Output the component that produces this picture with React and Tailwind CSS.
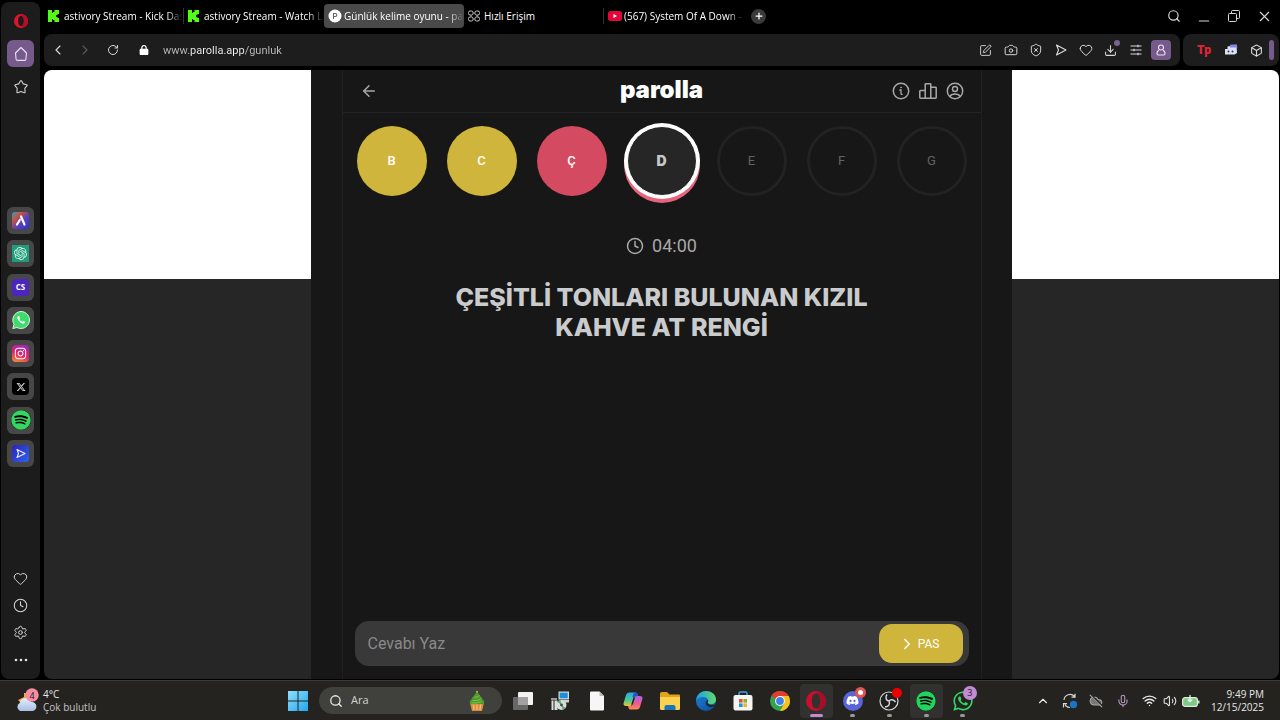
import { useState } from "react";
import clsx from "clsx";
import {
  ArrowLeft, Box, Camera, ChevronLeft, ChevronRight, ChevronUp, Clock, CloudOff,
  Download, Heart, Mic, Minus, Plus, RotateCw, Search, Settings, ShieldX,
  SquarePen, Volume2, Wifi, X,
} from "lucide-react";
import { FaDiscord, FaInstagram, FaLock, FaSpotify, FaWhatsapp, FaXTwitter } from "react-icons/fa6";
import { SiOpenai } from "react-icons/si";

const UI_FONT = "font-['Open_Sans','Noto_Sans',sans-serif]";

/* ---------- small drawings ---------- */

function KickIcon() {
  return (
    <svg viewBox="0 0 11 12" className="h-3 w-[11px] shrink-0" fill="#53fc18">
      <path d="M0 0h4v3h1V2h1.500V0H11v4H9.500v1H8v2h1.500v1H11v4H6.500v-2H5V9H4v3H0z" />
    </svg>
  );
}

function ParollaIcon() {
  return (
    <svg viewBox="0 0 14 14" className="h-[14px] w-[14px] shrink-0">
      <circle cx="7" cy="7" r="6.500" fill="#fff" />
      <path d="M5.500 10V4.500h1.800a1.500 1.500 0 0 1 0 3H5.500" fill="none" stroke="#666" strokeWidth="1.100" />
    </svg>
  );
}

function SpeedDialIcon() {
  return (
    <svg viewBox="0 0 12 12" className="h-3 w-3 shrink-0" fill="none" stroke="#c4c4c4">
      <rect x=".5" y="1" width="4.500" height="4" rx="1.500" />
      <rect x="7" y="1" width="4.500" height="4" rx="1.500" />
      <rect x=".5" y="7" width="4.500" height="4" rx="1.500" />
      <rect x="7" y="7" width="4.500" height="4" rx="1.500" />
      <path d="M5 3h2M5 9h2M3 5v2M9 5v2" strokeWidth=".7" />
    </svg>
  );
}

function YoutubeIcon() {
  return (
    <svg viewBox="0 0 14 10" className="h-[10px] w-[14px] shrink-0">
      <rect width="14" height="10" rx="2.500" fill="#e3063a" />
      <path d="M5.500 3v4l3.500-2z" fill="#fff" />
    </svg>
  );
}

function RestoreIcon() {
  return (
    <svg viewBox="0 0 12 12" className="h-3 w-3" fill="none" stroke="currentColor">
      <rect x=".5" y="3.500" width="8" height="8" rx="1" />
      <path d="M3.500 3.500V1.500q0-1 1-1h6q1 0 1 1v6q0 1-1 1h-2" />
    </svg>
  );
}

function SendIcon() {
  return (
    <svg viewBox="0 0 14 14" className="h-[14px] w-[14px]" fill="none" stroke="currentColor" strokeWidth="1.100" strokeLinejoin="round">
      <path d="m2.500 2 9.500 5-9.500 5L4.500 7z" />
    </svg>
  );
}

function SlidersIcon() {
  return (
    <svg viewBox="0 0 12 12" className="h-3 w-3" fill="none" stroke="currentColor" strokeWidth="1.100">
      <path d="M.5 2h11M.5 6h11M.5 10h11M8 .8v2.400M4 4.800v2.400M8 8.800v2.400" />
    </svg>
  );
}

function OperaIcon({ className, dark }) {
  return (
    <svg viewBox="0 0 20 20" className={className}>
      <path
        fillRule="evenodd"
        fill={dark ? "#c8102e" : "#e0142f"}
        d="M10 0a10 10 0 1 0 0 20 10 10 0 0 0 0-20zm0 2.500c2.600 0 4.200 3.400 4.200 7.500s-1.600 7.500-4.200 7.500S5.800 14.100 5.800 10 7.400 2.500 10 2.500z"
      />
      <path d="M10 2.500c2-1.800 5-1.600 7.200.5 3.700 3.800 3.700 10.200 0 14-2.200 2.100-5.200 2.300-7.200.5 2.600 0 4.200-3.400 4.200-7.500S12.600 2.500 10 2.500z" fill={dark ? "#a50f26" : "#b80d26"} />
    </svg>
  );
}

function HouseIcon() {
  return (
    <svg viewBox="0 0 16 16" className="h-4 w-4" fill="none" stroke="#ece0f4" strokeWidth="1.100" strokeLinejoin="round">
      <path d="M2.500 7 8 1.500 13.500 7l-.6 6.200a1.300 1.300 0 0 1-1.300 1.200H4.400a1.300 1.300 0 0 1-1.300-1.200z" />
    </svg>
  );
}

function StarIcon() {
  return (
    <svg viewBox="0 0 16 16" className="h-4 w-4" fill="none" stroke="#cfcfcf" strokeWidth="1.100" strokeLinejoin="round">
      <path d="M7.400 2q.6-.9 1.200 0l1.700 2.900 3.300.8q.9.300.4 1l-2.200 2.700.3 3.700q0 .9-.8.600L8 12.400l-3.300 1.300q-.8.300-.8-.6l.3-3.700L2 6.700q-.5-.7.4-1l3.300-.8z" />
    </svg>
  );
}

function AriaIcon() {
  return (
    <svg viewBox="0 0 17 17" className="h-[17px] w-[17px]">
      <defs>
        <linearGradient id="aria" x1="0" y1="0" x2="1" y2="1">
          <stop offset="0" stopColor="#2aa5c8" />
          <stop offset=".3" stopColor="#c9503f" />
          <stop offset=".6" stopColor="#5740c4" />
          <stop offset="1" stopColor="#2d2fd6" />
        </linearGradient>
      </defs>
      <rect width="17" height="17" rx="3" fill="url(#aria)" />
      <path d="m9 4.500 3.500 8M7.800 8 5 12.500" fill="none" stroke="#fff" strokeWidth="2.200" strokeLinecap="round" />
    </svg>
  );
}

function PlayerIcon() {
  return (
    <svg viewBox="0 0 17 17" className="h-[17px] w-[17px]">
      <defs>
        <linearGradient id="player" x1="0" y1="0" x2="1" y2="1">
          <stop offset="0" stopColor="#2c23b8" />
          <stop offset="1" stopColor="#2f62ee" />
        </linearGradient>
      </defs>
      <rect width="17" height="17" rx="3" fill="url(#player)" />
      <path d="m5 4.500 8 4-8 4 1.500-4z" fill="none" stroke="#eef" strokeWidth="1.100" strokeLinejoin="round" />
    </svg>
  );
}

function DotsIcon() {
  return (
    <svg viewBox="0 0 14 4" className="h-1 w-[14px]" fill="#e4e4e4">
      <circle cx="2" cy="2" r="1.300" />
      <circle cx="7" cy="2" r="1.300" />
      <circle cx="12" cy="2" r="1.300" />
    </svg>
  );
}

function PersonIcon() {
  return (
    <svg viewBox="0 0 14 14" className="h-[14px] w-[14px]" fill="none" stroke="#efe4f6" strokeWidth="1.100">
      <circle cx="7" cy="4.500" r="2.500" />
      <path d="M5 7.200C3.200 8 2.800 9.300 3 11q.1 1 1.200 1h5.600q1.100 0 1.200-1c.2-1.700-.2-3-2-3.800" />
    </svg>
  );
}

function InfoIcon() {
  return (
    <svg viewBox="0 0 18 18" className="h-[18px] w-[18px]" fill="none" stroke="currentColor" strokeWidth="1.500" strokeLinecap="round">
      <circle cx="9" cy="9" r="7.700" />
      <path d="M7.800 8h1.200v3.600q0 .9 1.200.8" strokeWidth="1.300" />
      <circle cx="9" cy="5.500" r=".5" fill="currentColor" strokeWidth=".7" />
    </svg>
  );
}

function PodiumIcon() {
  return (
    <svg viewBox="0 0 18 18" className="h-[18px] w-[18px]" fill="none" stroke="currentColor" strokeWidth="1.500" strokeLinejoin="round">
      <path d="M6.200 16.200H1.500a.7.700 0 0 1-.7-.7V9.200a.7.700 0 0 1 .7-.7h4.700M6.200 16.200V2.500a.7.700 0 0 1 .7-.7h4.200a.7.700 0 0 1 .7.700v13.700zM11.800 5.200h4.700a.7.700 0 0 1 .7.700v9.600a.7.700 0 0 1-.7.700h-4.700" />
    </svg>
  );
}

function AccountIcon() {
  return (
    <svg viewBox="0 0 18 18" className="h-[18px] w-[18px]" fill="none" stroke="currentColor" strokeWidth="1.500">
      <circle cx="9" cy="9" r="7.700" />
      <circle cx="9" cy="7" r="2.500" />
      <path d="M3.800 14.500c1-1.700 2.800-2.500 5.200-2.500s4.200.8 5.200 2.500" />
    </svg>
  );
}

function WeatherIcon() {
  return (
    <svg viewBox="0 0 26 26" className="h-[26px] w-[26px]">
      <defs>
        <linearGradient id="cloud" x1="0" y1="0" x2="0" y2="1">
          <stop offset="0" stopColor="#e4edfb" />
          <stop offset="1" stopColor="#a9bfe6" />
        </linearGradient>
      </defs>
      <path d="M9 5v4L3 12l3 3 10-2-3-8z" fill="#f0a63a" />
      <path d="M5 23a4.500 4.500 0 0 1-.3-8 6 6 0 0 1 11.600-1A4.500 4.500 0 0 1 17.500 23z" fill="url(#cloud)" />
      <circle cx="17" cy="7" r="6.700" fill="#f58ea4" />
      <text x="17" y="10.500" fontSize="9" textAnchor="middle" fill="#222" fontFamily="Open Sans, sans-serif">4</text>
    </svg>
  );
}

function StartIcon() {
  return (
    <svg viewBox="0 0 20 20" className="h-5 w-5">
      <defs>
        <linearGradient id="win" x1="0" y1="0" x2="1" y2="1">
          <stop offset="0" stopColor="#8fe0fb" />
          <stop offset="1" stopColor="#21a6ee" />
        </linearGradient>
      </defs>
      <path d="M0 0h9.500v9.500H0zM10.500 0H20v9.500h-9.500zM0 10.500h9.500V20H0zM10.500 10.500H20V20h-9.500z" fill="url(#win)" />
    </svg>
  );
}

function CupcakeIcon() {
  return (
    <svg viewBox="0 0 18 22" className="h-[22px] w-[18px]">
      <path d="M2 13h14l-2 8H4z" fill="#d98a3c" />
      <path d="M5.500 14.500 6 20M9 14.500V20M12.500 14.500 12 20" stroke="#f6be72" strokeWidth="1.400" />
      <path d="M9 1c1 2.500 3 3.500 3.500 5.500 1.800.8 2 2 2 3 2.300.7 2.500 4.500 0 4.500h-11c-2.500 0-2.300-3.800 0-4.500 0-1.500.5-2.500 2-3C6 4.500 8 3.500 9 1z" fill="#4d9a2f" />
      <path d="M6.500 7q3 1 5-1.500M4.500 10.500q5 1 8.500-1.500M3.500 13q6 .5 10-1.500" fill="none" stroke="#8bc242" />
      <circle cx="9" cy="1.800" r="1" fill="#c9b24a" />
    </svg>
  );
}

function TaskViewIcon() {
  return (
    <svg viewBox="0 0 22 20" className="h-5 w-[22px]">
      <rect x="6" y="1" width="15" height="13" rx="1" fill="#f1f1f1" />
      <rect x="1" y="6" width="15" height="13" rx="1" fill="#707070" fillOpacity=".9" />
      <rect x="6" y="6" width="10" height="8" fill="#a2a2a2" />
    </svg>
  );
}

function SetupIcon() {
  return (
    <svg viewBox="0 0 20 20" className="h-5 w-5">
      <rect x="8.500" y=".5" width="10.500" height="8" fill="#d5dbe0" />
      <rect x="9.700" y="1.700" width="8" height="5.500" fill="#1c8fd8" />
      <path d="M10 9h9v2.500h-9z" fill="#cfcfcf" />
      <path d="M1 7h6v2H1z" fill="#9b9b9b" />
      <path d="M1.500 9.500h2V19h-2zM4.500 9.500h3V19h-3z" fill="#dedede" />
      <circle cx="11.500" cy="14" r="5" fill="#d6ded8" />
      <path d="m11.500 14-4-3a5 5 0 0 1 3-2zM11.500 14l4 3a5 5 0 0 1-3 2z" fill="#58ab78" />
      <circle cx="11.500" cy="14" r="1.400" fill="#444" />
    </svg>
  );
}

function FileIcon() {
  return (
    <svg viewBox="0 0 16 20" className="h-5 w-4">
      <path d="M2 .5h8.500L15 5v13.500q0 1-1 1H2q-1 0-1-1v-17q0-1 1-1z" fill="#f6f6f6" />
      <path d="M10.500.5V5H15z" fill="#b9b9b9" />
    </svg>
  );
}

function CopilotIcon() {
  return (
    <svg viewBox="0 0 20 18" className="h-[18px] w-5">
      <defs>
        <linearGradient id="cop1" x1="0" y1="0" x2="0" y2="1">
          <stop offset="0" stopColor="#27a8f2" />
          <stop offset=".6" stopColor="#4fcb8c" />
          <stop offset="1" stopColor="#f1c52e" />
        </linearGradient>
        <linearGradient id="cop2" x1="0" y1="0" x2="0" y2="1">
          <stop offset="0" stopColor="#a961e8" />
          <stop offset=".6" stopColor="#ef5c8e" />
          <stop offset="1" stopColor="#f7904b" />
        </linearGradient>
      </defs>
      <path d="M6 .5h6.500q1.500 0 2 1.500L15 4h-2q-1.500 0-2 1.500L8.700 12.500Q8.200 14 6.500 14H3Q0 14 .6 11L3 3Q3.800.5 6 .5z" fill="url(#cop1)" />
      <path d="M14 17.500H7.500q-1.500 0-2-1.500L5 14h2q1.500 0 2-1.500l2.300-7Q11.800 4 13.500 4H17q3 0 2.400 3L17 15q-.8 2.500-3 2.500z" fill="url(#cop2)" />
      <path d="M11 .5h1.500q1.500 0 2 1.500L15 4h-2q-1.500 0-2 1.500L9.500 5z" fill="#2453c8" />
      <path d="m11.300 5.500-2.300 7" stroke="#24231f" strokeWidth="1.500" />
    </svg>
  );
}

function FolderIcon() {
  return (
    <svg viewBox="0 0 22 20" className="h-5 w-[22px]">
      <path d="M1 2.500Q1 1 2.500 1H8l2.500 2.500H20q1 0 1 1V9H1z" fill="#e3a21c" />
      <path d="M1 6h20v11.500q0 1.500-1.500 1.500h-17Q1 19 1 17.500z" fill="#fbd250" />
      <path d="M5.500 19v-3q0-2 2-2h7q2 0 2 2v3z" fill="#1976b8" />
    </svg>
  );
}

function EdgeIcon() {
  return (
    <svg viewBox="0 0 20 20" className="h-5 w-5">
      <defs>
        <linearGradient id="edge1" x1="0" y1="0" x2="1" y2="0">
          <stop offset="0" stopColor="#1f9ce0" />
          <stop offset="1" stopColor="#5fdc6e" />
        </linearGradient>
        <linearGradient id="edge2" x1="0" y1="0" x2="1" y2="1">
          <stop offset="0" stopColor="#1b86dc" />
          <stop offset="1" stopColor="#0b4a95" />
        </linearGradient>
      </defs>
      <circle cx="10" cy="10" r="10" fill="url(#edge2)" />
      <path d="M0 9.500C.5 4 4.500 0 10 0c6 0 10 4 10 8.500 0 3-2.300 4.700-5 4.700-2.300 0-3.500-.8-3.500-1.600 0-.5.7-.9.7-2.100C12.200 7.300 9.700 6 7 6 4 6 1.200 7.200 0 9.500z" fill="url(#edge1)" />
      <path d="M11.500 11.600c0 1.200 1.500 2.600 4 2.600 1.300 0 2.300-.3 4.100-1.300.2 1.300-2 3-4.800 3-4.500 0-6.800-3.800-3.300-6.800 1.600 1 0 1.900 0 2.500z" fill="#25241f" />
    </svg>
  );
}

function StoreIcon() {
  return (
    <svg viewBox="0 0 20 20" className="h-5 w-5">
      <path d="M6 5V2.500Q6 1 7.500 1h5Q14 1 14 2.500V5" fill="none" stroke="#38a3e8" strokeWidth="1.500" />
      <rect x=".5" y="4" width="19" height="15.500" rx="2" fill="#f5f5f5" />
      <path d="M6 8h3.600v3.600H6z" fill="#e8502e" />
      <path d="M10.400 8H14v3.600h-3.600z" fill="#7eb52c" />
      <path d="M6 12.400h3.600V16H6z" fill="#1c93dd" />
      <path d="M10.400 12.400H14V16h-3.600z" fill="#f3b524" />
    </svg>
  );
}

function ChromeIcon() {
  return (
    <svg viewBox="0 0 20 20" className="h-5 w-5">
      <circle cx="10" cy="10" r="10" fill="#33a352" />
      <path d="M10 10 1.340 5A10 10 0 0 1 18.660 5z" fill="#e33b2e" />
      <path d="M10 5h8.660A10 10 0 0 1 10 20l4.300-7.500z" fill="#fbc116" />
      <circle cx="10" cy="10" r="4.900" fill="#fff" />
      <circle cx="10" cy="10" r="3.900" fill="#3f7fe8" />
    </svg>
  );
}

function ObsIcon() {
  return (
    <svg viewBox="0 0 20 20" className="h-5 w-5" fill="none" stroke="#d8d8d8" strokeWidth="1.200">
      <circle cx="10" cy="10" r="9" fill="#1f1f1f" />
      <path d="M8 3.500c-2 3-1 6 2 6.500M16.500 11c-2-2.800-5-3-6.500-1M6 15.800c3.600.4 5.500-2.800 4-5.800" strokeWidth="1.500" />
    </svg>
  );
}

function SyncIcon() {
  return (
    <svg viewBox="0 0 16 16" className="h-4 w-4" fill="none" stroke="#d6d6d6" strokeWidth="1.200">
      <path d="M2 7a6 6 0 0 1 10.500-3.500M13 .8v3.400H9.500M3 11.500 4 13a6 6 0 0 0 4 1.500M1.500 14.500v-3.800H5" />
      <circle cx="11.500" cy="11.500" r="3.700" fill="#1a74c4" stroke="none" />
    </svg>
  );
}

function BatteryIcon() {
  return (
    <svg viewBox="0 0 18 12" className="h-3 w-[18px]">
      <rect x=".6" y="2.600" width="14.800" height="8.800" rx="2.500" fill="#7fc987" stroke="#dcefdc" strokeWidth="1.200" />
      <path d="M16.800 5.500v3" stroke="#dcefdc" strokeWidth="1.400" />
      <path d="M8 0v6.500M5.800 4.500 8 6.700l2.200-2.200" fill="none" stroke="#f4fbf4" strokeWidth="1.200" />
    </svg>
  );
}

/* ---------- browser ---------- */

const tabs = [
  { title: "astivory Stream - Kick Das", icon: <KickIcon />, divider: true, fade: true },
  { title: "astivory Stream - Watch Li", icon: <KickIcon />, fade: true },
  { title: "Günlük kelime oyunu - pa", icon: <ParollaIcon />, fade: true },
  { title: "Hızlı Erişim", icon: <SpeedDialIcon />, divider: true },
  { title: "(567) System Of A Down -", icon: <YoutubeIcon />, fade: true },
];

function TabBar() {
  const [active, setActive] = useState(2);

  return (
    <div className="mr-px flex h-8 items-center">
      <div className="flex" role="tablist">
        {tabs.map((tab, i) => (
          <button
            key={i}
            role="tab"
            aria-selected={i === active}
            onClick={() => setActive(i)}
            className={clsx(
              "flex h-6 w-[140px] items-center rounded-sm pl-1 text-left text-[10px] text-white",
              i === active && "bg-[#4a4a4a]"
            )}
          >
            <span className="flex w-4 shrink-0 items-center">{tab.icon}</span>
            <span
              className={clsx(
                "min-w-0 flex-1 whitespace-nowrap",
                tab.fade && "[mask-image:linear-gradient(to_right,black_86%,transparent)]"
              )}
            >
              {tab.title}
            </span>
            {tab.divider && <span className="h-4 w-px shrink-0 bg-[#333333]" />}
          </button>
        ))}
      </div>
      <button aria-label="Yeni sekme" className="ml-[7px] flex h-[15px] w-[15px] items-center justify-center rounded-full bg-[#3a3a3a] text-white">
        <Plus size={10} strokeWidth={3} />
      </button>
      <div className="ml-auto flex text-[#d8d8d8]">
        <button aria-label="Ara" className="flex h-8 w-[30px] items-center justify-center"><Search size={14} strokeWidth={2} /></button>
        <button aria-label="Simge durumuna küçült" className="flex h-8 w-[30px] items-end justify-center pb-[3px]"><Minus size={16} strokeWidth={1.7} /></button>
        <button aria-label="Geri yükle" className="flex h-8 w-[30px] items-center justify-center"><RestoreIcon /></button>
        <button aria-label="Kapat" className="flex h-8 w-[30px] items-center justify-center"><X size={17} strokeWidth={1.6} /></button>
      </div>
    </div>
  );
}

const actions = [
  { label: "Düzenle", icon: <SquarePen size={13} strokeWidth={1.7} /> },
  { label: "Anlık görüntü", icon: <Camera size={14} strokeWidth={1.7} /> },
  { label: "Reklam engelleyici", icon: <ShieldX size={14} strokeWidth={1.7} /> },
  { label: "Gönder", icon: <SendIcon /> },
  { label: "Favorilere ekle", icon: <Heart size={14} strokeWidth={1.7} /> },
  { label: "İndirilenler", icon: <Download size={13} strokeWidth={1.900} />, dot: true },
  { label: "Kolay kurulum", icon: <SlidersIcon /> },
];

function AddressBar() {
  const [url, setUrl] = useState("www.parolla.app/gunluk");

  return (
    <div className="mr-px mt-0.5 flex gap-[3px] text-[#dadada]">
      <div className="flex h-8 flex-1 items-center rounded-lg bg-[#1d1d1d] pr-[9px]">
        <button aria-label="Geri" className="flex w-[27px] justify-center"><ChevronLeft size={16} strokeWidth={1.7} /></button>
        <button aria-label="İleri" className="flex w-[28px] justify-center text-[#5c5c5c]"><ChevronRight size={16} strokeWidth={1.7} /></button>
        <button aria-label="Yenile" className="flex w-[28px] justify-center"><RotateCw size={12} strokeWidth={2} /></button>
        <span className="flex w-[34px] justify-center text-white"><FaLock size={10} /></span>
        <input
          aria-label="Adres"
          value={url}
          onChange={(e) => setUrl(e.target.value)}
          className="ml-[2px] h-6 min-w-0 flex-1 bg-[linear-gradient(to_right,#bdbdbd_26px,#f4f4f4_26px,#f4f4f4_82px,#bdbdbd_82px)] bg-clip-text font-['Roboto',sans-serif] text-[11px] text-transparent outline-none"
        />
        {actions.map(({ label, icon, dot }) => (
          <button key={label} aria-label={label} className="relative flex w-[25px] justify-center">
            {icon}
            {dot && <span className="absolute -top-1 right-[3px] h-[6px] w-[6px] rounded-full bg-[#7b6192]" />}
          </button>
        ))}
        <button aria-label="Profil" className="ml-[3px] flex h-5 w-5 items-center justify-center rounded bg-[#775a8c]">
          <PersonIcon />
        </button>
      </div>
      <div className="flex h-8 w-24 items-center justify-end rounded-lg bg-[#1d1d1d] pr-[5px]">
        <button aria-label="Tp" className="w-[26px] text-center font-['Roboto',sans-serif] text-xs font-black text-[#e0243a]">Tp</button>
        <button aria-label="Sohbet" className="flex w-[27px] justify-center">
          <svg viewBox="0 0 14 12" className="h-3 w-[14px]">
            <path d="M1 5h2.500V2.500L12.500 1l.5 8-2.500 1.500H1z" fill="#dfe0fa" />
            <path d="M6 .8 12.500.3l1 3.200H6z" fill="#7e86e8" />
            <circle cx="4.500" cy="7.500" r="1" fill="#33386f" />
            <circle cx="8.500" cy="7.500" r="1" fill="#33386f" />
          </svg>
        </button>
        <button aria-label="Eklentiler" className="flex w-[25px] justify-center"><Box size={13} strokeWidth={2} /></button>
        <span className="h-5 w-[5px] rounded-sm bg-[#775a8c]" />
      </div>
    </div>
  );
}

const apps = [
  { name: "Aria", icon: <AriaIcon /> },
  {
    name: "ChatGPT",
    icon: <span className="flex h-[17px] w-[17px] items-center justify-center bg-[#1f9d7a] text-[#d9f2ea]"><SiOpenai size={13} /></span>,
  },
  {
    name: "CS",
    icon: <span className="flex h-[17px] w-[17px] items-center justify-center rounded bg-[#4a25c0] text-[8px] font-bold text-white">CS</span>,
  },
  {
    name: "WhatsApp",
    icon: (
      <svg viewBox="0 0 18 18" className="h-[18px] w-[18px]">
        <path d="M9 .5a8.500 8.500 0 1 1-4 16L.8 17.500 2 13.300A8.500 8.500 0 0 1 9 .5z" fill="#3ddc6c" stroke="#d7f5df" />
        <path d="M6.200 5c-1.500 1-1 3 .8 5s4 3.300 5.300 2.300c.8-.6.900-1.300.7-1.600l-1.900-.9-.9 1c-1.300-.5-2.300-1.400-2.900-2.700l.7-.9L7.200 5z" fill="#fff" />
      </svg>
    ),
  },
  {
    name: "Instagram",
    icon: (
      <span className="flex h-[17px] w-[17px] items-center justify-center rounded bg-[linear-gradient(20deg,#f39a2c,#e0246c_45%,#9027c4)] text-white">
        <FaInstagram size={13} />
      </span>
    ),
  },
  {
    name: "X",
    icon: <span className="flex h-[17px] w-[17px] items-center justify-center rounded bg-black text-[#d8d8d8]"><FaXTwitter size={10} /></span>,
  },
  {
    name: "Spotify",
    icon: <span className="rounded-full bg-black text-[#35d760]"><FaSpotify size={20} /></span>,
  },
  { name: "Player", icon: <PlayerIcon /> },
];

function Sidebar() {
  return (
    <aside className="ml-px mt-0.5 flex w-[39px] shrink-0 flex-col items-center rounded-lg bg-[#1c1c1c] text-[#d6d6d6]">
      <button aria-label="Opera" className="mt-3"><OperaIcon className="h-[14px] w-[14px]" /></button>
      <button aria-label="Ana sayfa" className="mt-3 flex h-[27px] w-[27px] items-center justify-center rounded-md bg-[#775a8c]">
        <HouseIcon />
      </button>
      <button aria-label="Yer imleri" className="mt-3"><StarIcon /></button>
      <nav className="mt-28 flex h-[260px] flex-col justify-between">
        {apps.map((app) => (
          <button key={app.name} aria-label={app.name} className="flex h-[27px] w-[27px] items-center justify-center rounded-md bg-[#474747]">
            {app.icon}
          </button>
        ))}
      </nav>
      <div className="mb-1.5 mt-auto flex flex-col items-center">
        <button aria-label="Favoriler" className="flex h-[27px] items-center"><Heart size={15} strokeWidth={1.6} /></button>
        <button aria-label="Geçmiş" className="flex h-[27px] items-center"><Clock size={15} strokeWidth={1.7} /></button>
        <button aria-label="Ayarlar" className="flex h-[27px] items-center"><Settings size={15} strokeWidth={1.6} /></button>
        <button aria-label="Diğer" className="flex h-[27px] items-center"><DotsIcon /></button>
      </div>
    </aside>
  );
}

/* ---------- game ---------- */

const letters = [
  { char: "B", state: "passed" },
  { char: "C", state: "passed" },
  { char: "Ç", state: "wrong" },
  { char: "D", state: "active" },
  { char: "E", state: "idle" },
  { char: "F", state: "idle" },
  { char: "G", state: "idle" },
];

const letterStyles = {
  passed: "bg-[#cfb53b] text-[13px] text-white font-medium",
  wrong: "bg-[#d44a60] text-[13px] text-white font-medium",
  active:
    "border border-white bg-[#262626] font-['Inter',sans-serif] text-sm text-[#c8c8c8] font-black ring-[3px] ring-white shadow-[0_4px_0_3px_#e8647c]",
  idle: "border-[3px] border-[#222222] text-[13px] text-[#626262]",
};

function Game() {
  const [answer, setAnswer] = useState("");

  return (
    <main className="flex w-full max-w-[701px] shrink-0 justify-center bg-[#171717] font-['Roboto','Inter',sans-serif]">
      <div className="flex w-full max-w-[640px] flex-col border-x border-[#202020]">
        <header className="flex h-[43px] items-center border-b border-[#242424] px-[17px] text-[#a8a8a8]">
          <div className="flex flex-1">
            <button aria-label="Geri"><ArrowLeft size={18} strokeWidth={2} /></button>
          </div>
          <h1 className="pb-0.5 font-['Inter',sans-serif] text-2xl leading-7 font-black text-white">parolla</h1>
          <div className="flex flex-1 justify-end gap-[9px]">
            <button aria-label="Nasıl oynanır"><InfoIcon /></button>
            <button aria-label="İstatistikler"><PodiumIcon /></button>
            <button aria-label="Hesap"><AccountIcon /></button>
          </div>
        </header>

        <ul className="mt-[13px] flex justify-center gap-5">
          {letters.map((l) => (
            <li
              key={l.char}
              className={clsx("flex h-[70px] w-[70px] shrink-0 items-center justify-center rounded-full", letterStyles[l.state])}
            >
              {l.char}
            </li>
          ))}
        </ul>

        <div className="mt-9 flex h-7 items-center justify-center gap-2 text-lg text-[#a8a8a8]">
          <Clock size={18} strokeWidth={2} />
          <span>04:00</span>
        </div>

        <h2 className="mx-auto mt-[22px] max-w-[460px] text-center font-['Inter',sans-serif] text-[25px] leading-[30px] font-extrabold text-[#cacbcc]">
          ÇEŞİTLİ TONLARI BULUNAN KIZIL KAHVE AT RENGİ
        </h2>

        <form
          onSubmit={(e) => e.preventDefault()}
          className="mx-3 mb-[13px] mt-auto flex h-[45px] items-center rounded-[14px] bg-[#393939] pr-[6px]"
        >
          <input
            aria-label="Cevabı Yaz"
            placeholder="Cevabı Yaz"
            value={answer}
            onChange={(e) => setAnswer(e.target.value)}
            className="h-full min-w-0 flex-1 bg-transparent pl-[13px] text-base text-white outline-none placeholder:text-[#8a8a8a]"
          />
          <button type="submit" className="flex h-[39px] w-[84px] items-center justify-center gap-0.5 rounded-[13px] bg-[#cfb53b] pr-1 text-xs text-white">
            <ChevronRight size={18} strokeWidth={2} />
            PAS
          </button>
        </form>
      </div>
    </main>
  );
}

function Page() {
  return (
    <div className="mr-px mt-1 flex min-h-0 flex-1 overflow-hidden rounded-lg bg-[#262626]">
      <div className="h-[209px] min-w-0 flex-1 bg-white" />
      <Game />
      <div className="h-[209px] min-w-0 flex-1 bg-white" />
    </div>
  );
}

/* ---------- taskbar ---------- */

const pinned = [
  { name: "Görev görünümü", icon: <TaskViewIcon /> },
  { name: "Kurulum", icon: <SetupIcon /> },
  { name: "Dosya", icon: <FileIcon /> },
  { name: "Copilot", icon: <CopilotIcon /> },
  { name: "Dosya Gezgini", icon: <FolderIcon /> },
  { name: "Edge", icon: <EdgeIcon /> },
  { name: "Store", icon: <StoreIcon /> },
  { name: "Chrome", icon: <ChromeIcon /> },
  { name: "Opera", icon: <OperaIcon className="h-5 w-5" dark />, focused: true, lit: true },
  {
    name: "Discord",
    running: true,
    icon: <span className="flex h-5 w-5 items-center justify-center rounded-full bg-[#5865d8] text-white"><FaDiscord size={13} /></span>,
    badge: <span className="absolute right-[5px] top-[4px] flex h-[11px] w-[11px] items-center justify-center rounded-full bg-[#dd5550]"><span className="h-[5px] w-[5px] rounded-full bg-white" /></span>,
  },
  {
    name: "OBS",
    running: true,
    icon: <ObsIcon />,
    badge: <span className="absolute right-[6px] top-[5px] h-[10px] w-[10px] rounded-full bg-[#f00000]" />,
  },
  {
    name: "Spotify",
    running: true,
    lit: true,
    icon: <span className="rounded-full bg-black text-[#24d45c]"><FaSpotify size={20} /></span>,
  },
  {
    name: "WhatsApp",
    running: true,
    icon: <FaWhatsapp size={22} className="text-[#2fd867]" />,
    badge: <span className="absolute right-[4px] top-[3px] flex h-[14px] w-[14px] items-center justify-center rounded-full bg-[#c18ad2] text-[9px] text-[#1c1c1c]">3</span>,
  },
];

function Taskbar() {
  return (
    <footer className="flex h-10 shrink-0 items-center border-t border-[#3a3a36] bg-[#24231f] text-[10px] text-[#e8e8e8]">
      <button className="flex w-[280px] items-center gap-[2px] pl-[15px] text-left leading-[13px]">
        <WeatherIcon />
        <span>
          <span className="block">4°C</span>
          <span className="block text-[#c4c4c4]">Çok bulutlu</span>
        </span>
      </button>
      <button aria-label="Başlat" className="flex w-9 justify-center"><StartIcon /></button>
      <label className="mx-[3px] flex h-[27px] w-[183px] items-center gap-2 rounded-full bg-[#40403c] pl-[10px] pr-4">
        <Search size={14} strokeWidth={2.200} className="shrink-0" />
        <input aria-label="Ara" placeholder="Ara" className="min-w-0 flex-1 bg-transparent text-[11px] outline-none placeholder:text-[#d2d2d2]" />
        <CupcakeIcon />
      </label>
      <div className="flex w-[476px]">
        {pinned.map((app) => (
          <button key={app.name} aria-label={app.name} className="relative flex h-9 flex-1 items-center justify-center">
            <span className={clsx("flex h-[34px] w-[33px] items-center justify-center rounded", app.lit && "bg-[#31312f]")}>
              {app.icon}
            </span>
            {app.badge}
            {app.focused && <span className="absolute bottom-0.5 h-[3px] w-[13px] rounded-full bg-[#c18ad2]" />}
            {app.running && <span className="absolute bottom-0.5 h-[3px] w-[5px] rounded-full bg-[#9a9a96]" />}
          </button>
        ))}
      </div>
      <div className="ml-auto flex items-center pr-4">
        <button aria-label="Gizli simgeler" className="flex w-[27px] justify-center"><ChevronUp size={14} strokeWidth={2} /></button>
        <span className="flex w-[27px] justify-center"><SyncIcon /></span>
        <span className="flex w-[26px] justify-center"><CloudOff size={14} strokeWidth={1.8} fill="#777" className="text-[#a8a8a4]" /></span>
        <span className="flex w-[27px] justify-center"><Mic size={14} strokeWidth={1.8} className="text-[#b89cc6]" /></span>
        <button aria-label="Ağ, ses ve pil" className="flex items-center">
          <span className="flex w-[26px] justify-center"><Wifi size={15} strokeWidth={2.200} /></span>
          <span className="flex w-4 justify-center"><Volume2 size={14} strokeWidth={1.8} /></span>
          <span className="flex w-[26px] justify-center"><BatteryIcon /></span>
        </button>
        <button className="w-[60px] text-right leading-[13px]">
          <span className="block">9:49 PM</span>
          <span className="block">12/15/2025</span>
        </button>
      </div>
    </footer>
  );
}

export default function App() {
  return (
    <div className={clsx("flex h-screen flex-col overflow-hidden bg-black", UI_FONT)}>
      <div className="flex min-h-0 flex-1 gap-1 pb-px">
        <Sidebar />
        <div className="flex min-w-0 flex-1 flex-col">
          <TabBar />
          <AddressBar />
          <Page />
        </div>
      </div>
      <Taskbar />
    </div>
  );
}
